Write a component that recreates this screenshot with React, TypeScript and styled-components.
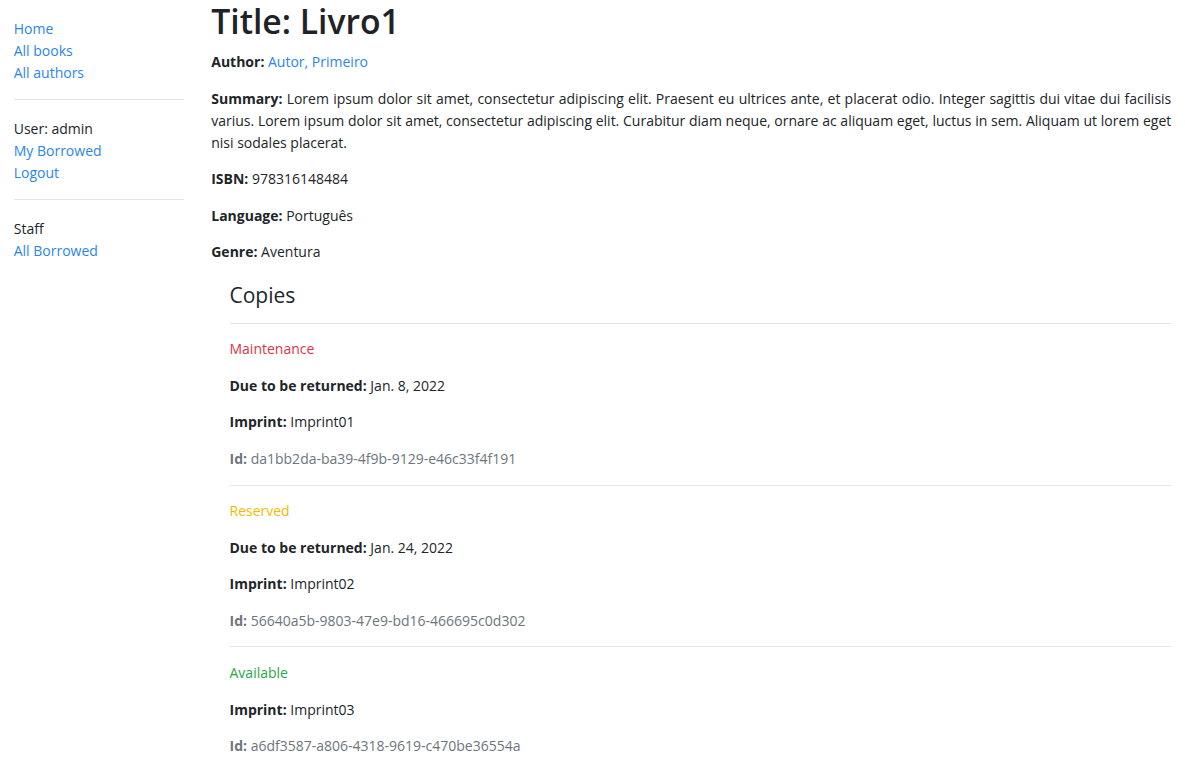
import React from "react";
import styled, { createGlobalStyle } from "styled-components";

const S = 0.9144;
const px = (v: number) => `${(v * S).toFixed(2)}px`;

const Global = createGlobalStyle`
  html, body { margin: 0; padding: 0; background: #fff; }
  body {
    font-family: "Open Sans", "Noto Sans", Arial, sans-serif;
    font-size: 14px;
    line-height: ${px(24)};
    color: #212529;
    text-align: left;
  }
  * { box-sizing: border-box; }
`;

const Container = styled.div`
  display: flex;
  width: 100%;
`;

const SideCol = styled.div`
  flex: 0 0 16.6667%;
  max-width: 16.6667%;
  padding: 0 ${px(15)};
`;

const MainCol = styled.div`
  flex: 0 0 83.3333%;
  max-width: 83.3333%;
  padding: 0 ${px(15)};
`;

const NavList = styled.ul`
  list-style: none;
  padding: 0;
  margin: ${px(20)} 0 ${px(16)};
`;

const NavItem = styled.li``;

const Link = styled.a`
  color: #2a86ec;
  text-decoration: none;
  cursor: pointer;
`;

const Rule = styled.hr`
  border: 0;
  border-top: 1px solid rgba(0, 0, 0, 0.1);
  margin: ${px(16)} 0;
`;

const Title = styled.h1`
  font-size: 33.7px;
  line-height: ${px(48)};
  font-weight: 600;
  margin: 0 0 ${px(8)};
  color: #1f2328;
`;

const Para = styled.p<{ $tone?: string; $justify?: boolean }>`
  margin: 0 0 ${px(16)};
  color: ${(p) => p.$tone || "inherit"};
  text-align: ${(p) => (p.$justify ? "justify" : "left")};
`;

const Label = styled.strong`
  font-weight: 700;
`;

const CopiesBox = styled.div`
  margin: ${px(20)} 0 0 ${px(20)};
`;

const SubTitle = styled.h4`
  font-size: 21px;
  line-height: ${px(28.8)};
  font-weight: 500;
  margin: 0 0 ${px(8)};
`;

const tones: Record<string, string> = {
  Maintenance: "#dc3545",
  Reserved: "#f5b800",
  Available: "#28a745",
};

const copies = [
  { status: "Maintenance", due: "Jan. 8, 2022", imprint: "Imprint01", id: "da1bb2da-ba39-4f9b-9129-e46c33f4f191" },
  { status: "Reserved", due: "Jan. 24, 2022", imprint: "Imprint02", id: "56640a5b-9803-47e9-bd16-466695c0d302" },
  { status: "Available", due: "", imprint: "Imprint03", id: "a6df3587-a806-4318-9619-c470be36554a" },
];

export default function App() {
  return (
    <>
      <Global />
      <Container>
        <SideCol>
          <NavList>
            <NavItem><Link>Home</Link></NavItem>
            <NavItem><Link>All books</Link></NavItem>
            <NavItem><Link>All authors</Link></NavItem>
          </NavList>
          <Rule />
          <NavList>
            <NavItem>User: admin</NavItem>
            <NavItem><Link>My Borrowed</Link></NavItem>
            <NavItem><Link>Logout</Link></NavItem>
          </NavList>
          <Rule />
          <NavList>
            <NavItem>Staff</NavItem>
            <NavItem><Link>All Borrowed</Link></NavItem>
          </NavList>
        </SideCol>
        <MainCol>
          <Title>Title: Livro1</Title>
          <Para><Label>Author:</Label> <Link>Autor, Primeiro</Link></Para>
          <Para $justify>
            <Label>Summary:</Label> Lorem ipsum dolor sit amet, consectetur adipiscing elit. Praesent eu ultrices ante, et placerat odio. Integer sagittis dui vitae dui facilisis varius. Lorem ipsum dolor sit amet, consectetur adipiscing elit. Curabitur diam neque, ornare ac aliquam eget, luctus in sem. Aliquam ut lorem eget nisi sodales placerat.
          </Para>
          <Para><Label>ISBN:</Label> 978316148484</Para>
          <Para><Label>Language:</Label> Português</Para>
          <Para><Label>Genre:</Label> Aventura</Para>
          <CopiesBox>
            <SubTitle>Copies</SubTitle>
            {copies.map((c) => (
              <React.Fragment key={c.id}>
                <Rule />
                <Para $tone={tones[c.status]}>{c.status}</Para>
                {c.due && <Para><Label>Due to be returned:</Label> {c.due}</Para>}
                <Para><Label>Imprint:</Label> {c.imprint}</Para>
                <Para $tone="#6c757d"><Label>Id:</Label> {c.id}</Para>
              </React.Fragment>
            ))}
          </CopiesBox>
        </MainCol>
      </Container>
    </>
  );
}
